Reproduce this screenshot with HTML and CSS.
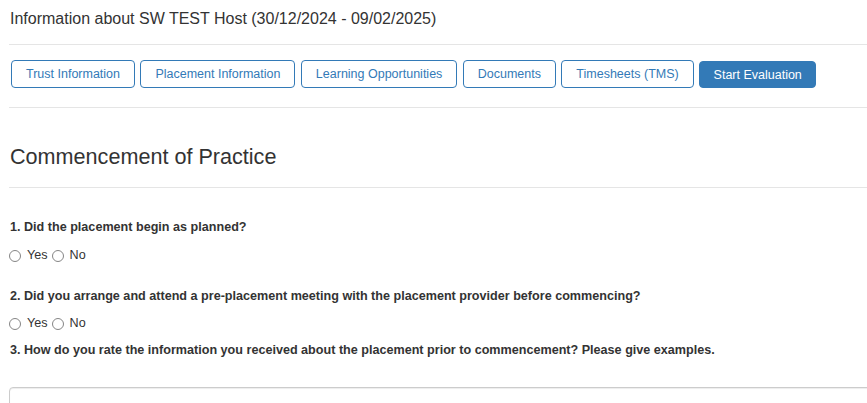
FILE: index.html
```html
<!DOCTYPE html>
<html lang="en">
<head>
<meta charset="utf-8">
<title>Information about SW TEST Host</title>
<link rel="stylesheet" href="styles.css">
</head>
<body>
<div class="page">
  <h4 class="page-title">Information about SW TEST Host (30/12/2024 - 09/02/2025)</h4>
  <hr class="rule">
  <div class="tabs">
    <button class="btn btn-outline">Trust Information</button>
    <button class="btn btn-outline">Placement Information</button>
    <button class="btn btn-outline">Learning Opportunities</button>
    <button class="btn btn-outline">Documents</button>
    <button class="btn btn-outline">Timesheets (TMS)</button>
    <button class="btn btn-primary">Start Evaluation</button>
  </div>
  <hr class="rule rule-tabs">
  <h3 class="section-title">Commencement of Practice</h3>
  <hr class="rule rule-section">

  <form class="questions">
    <p class="question q-first">1. Did the placement begin as planned?</p>
    <div class="choices">
      <label class="choice"><input type="radio" name="q1" class="radio"><span>Yes</span></label>
      <label class="choice"><input type="radio" name="q1" class="radio"><span>No</span></label>
    </div>
    <p class="question">2. Did you arrange and attend a pre-placement meeting with the placement provider before commencing?</p>
    <div class="choices choices-tight">
      <label class="choice"><input type="radio" name="q2" class="radio"><span>Yes</span></label>
      <label class="choice"><input type="radio" name="q2" class="radio"><span>No</span></label>
    </div>
    <p class="question q-tight">3. How do you rate the information you received about the placement prior to commencement? Please give examples.</p>
    <textarea class="answer" rows="4"></textarea>
  </form>
</div>
</body>
</html>
```

FILE: styles.css
```css
* { box-sizing: border-box; }

html, body {
  margin: 0;
  padding: 0;
  background: #fff;
  overflow: hidden;
}

body {
  font-family: "Liberation Sans", Arial, Helvetica, sans-serif;
  color: #333;
}

.page {
  padding-left: 9px;
}

.page-title {
  margin: 0;
  padding: 9px 1px 0;
  font-size: 16px;
  line-height: 20px;
  font-weight: normal;
  color: #333;
}

.rule {
  margin: 15px 0 0;
  border: 0;
  border-top: 1px solid #e5e5e5;
  height: 0;
}

.tabs {
  display: flex;
  gap: 5.4px;
  margin-top: 15px;
  padding-left: 2px;
}

.btn {
  font-family: inherit;
  font-size: 12.5px;
  line-height: 16px;
  padding: 5px 14px;
  border-radius: 4px;
  border: 1px solid #337ab7;
  background: #fff;
  color: #337ab7;
  white-space: nowrap;
  cursor: pointer;
}

.btn-primary {
  background: #337ab7;
  border-color: #337ab7;
  color: #fff;
  padding: 5px 13.5px 4px;
  margin-top: 1px;
}

.rule-tabs {
  margin-top: 19px;
}

.section-title {
  margin: 37px 0 0;
  padding-left: 1px;
  font-size: 21.6px;
  line-height: 24px;
  font-weight: normal;
  color: #333;
}

.rule-section {
  margin-top: 18px;
}

.questions {
  margin: 0;
}

.question {
  margin: 0;
  padding-left: 1px;
  font-size: 12.6px;
  line-height: 18px;
  font-weight: bold;
  color: #333;
}

.q-first {
  margin-top: 30px;
}

.choices {
  display: flex;
  align-items: center;
  height: 18px;
  margin: 10px 0 23px;
}

.choices-tight {
  margin: 9px 0 9px;
}

.choice {
  display: flex;
  align-items: center;
  font-size: 12.6px;
  color: #333;
  margin-right: 4px;
}

.radio {
  -webkit-appearance: none;
  appearance: none;
  width: 12px;
  height: 12px;
  margin: 2px 6px 0 0;
  border: 1px solid #858585;
  border-radius: 50%;
  background: #fff;
}

.answer {
  display: block;
  margin-top: 28px;
  width: calc(100% + 40px);
  height: 60px;
  border: 1px solid #ccc;
  border-radius: 4px;
  box-shadow: inset 0 1px 1px rgba(0,0,0,.075);
  resize: none;
}
```
